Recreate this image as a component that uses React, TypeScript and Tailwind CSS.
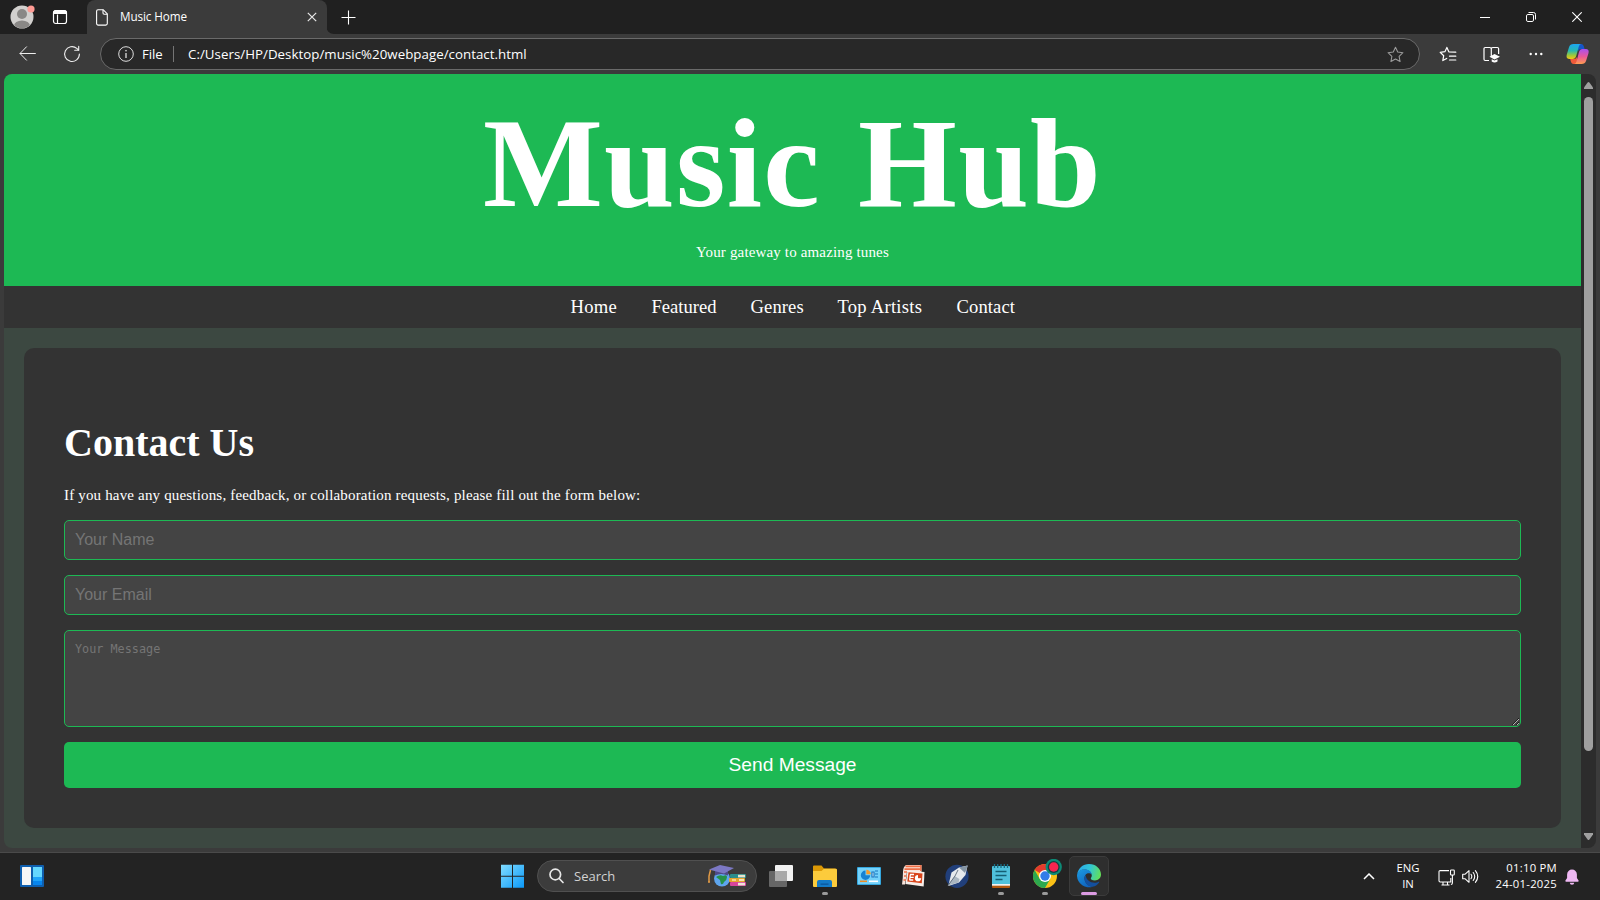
import React from "react";

const UI = "font-['Open_Sans','Noto_Sans',sans-serif]";

function TitleBar() {
  return (
    <div className="flex h-[34px] shrink-0 items-stretch bg-[#202020]">
      <div className="flex w-[87px] items-center bg-[#202020]">
        <svg className="ml-[10px]" width="26" height="26" viewBox="0 0 26 26">
          <defs>
            <clipPath id="av"><circle cx="12" cy="13" r="11.3" /></clipPath>
          </defs>
          <circle cx="12" cy="13" r="11.5" fill="#d2d0ce" />
          <g clipPath="url(#av)" fill="#8a8886">
            <circle cx="12" cy="10" r="5" />
            <ellipse cx="12" cy="22" rx="8" ry="5.6" />
          </g>
          <circle cx="21" cy="5" r="3.6" fill="#ff9b94" />
        </svg>
        <svg className="ml-[16px]" width="16" height="16" viewBox="0 0 16 16" fill="none" stroke="#fff">
          <rect x="1.5" y="1.5" width="13" height="13" rx="2.2" strokeWidth="1.2" />
          <path d="M1.5 3.7a2.2 2.2 0 0 1 2.2-2.2h8.6a2.2 2.2 0 0 1 2.2 2.2V4.500h-13z" fill="#fff" />
          <path d="M5.5 5.5v9" strokeWidth="1.2" />
        </svg>
      </div>
      <div className="flex w-[240px] items-center rounded-t-[8px] bg-[#3b3b3b]">
        <svg className="ml-[9px]" width="12" height="17" viewBox="0 0 12 17" fill="none" stroke="#fff" strokeWidth="1.1" strokeLinejoin="round">
          <path d="M2 .8h5.3l4 4V14.500a1.600 1.600 0 0 1-1.600 1.600H2.200A1.600 1.600 0 0 1 .6 14.500V2.300A1.500 1.500 0 0 1 2 .8z" />
          <path d="M7 .8v3.200a1.200 1.200 0 0 0 1.200 1.200h3" />
        </svg>
        <span className={`${UI} -mt-[2px] ml-[12px] w-[187px] text-[11.7px] leading-4 tracking-[-0.1px] text-white`}>Music Home</span>
        <svg width="10" height="10" viewBox="0 0 10 10" stroke="#e8e8e8" strokeWidth="1.2">
          <path d="M.8.8l8.400 8.400M9.200.8L.8 9.200" />
        </svg>
      </div>
      <div className="flex flex-1 items-center">
        <svg className="-ml-px self-end" width="8" height="8" viewBox="0 0 8 8"><path d="M0 0v8h8A8 8 0 0 1 0 0z" fill="#3b3b3b" /></svg>
        <svg className="ml-[7px]" width="15" height="15" viewBox="0 0 15 15" stroke="#fff" strokeWidth="1.100"><path d="M7.500.5v14M.5 7.500h14" /></svg>
        <div className="flex-1" />
        <svg width="10" height="10" viewBox="0 0 10 10" stroke="#fff"><path d="M0 5.500h10" /></svg>
        <svg className="ml-[36px]" width="10" height="10" viewBox="0 0 10 10" fill="none" stroke="#fff">
          <rect x=".5" y="2.500" width="7" height="7" rx="1.400" />
          <path d="M2.500.5H7.500A2 2 0 0 1 9.500 2.500V7.500" />
        </svg>
        <svg className="ml-[36px] mr-[18px]" width="10" height="10" viewBox="0 0 10 10" stroke="#fff" strokeWidth="1.100"><path d="M.3.3l9.400 9.400M9.700.3L.3 9.700" /></svg>
      </div>
    </div>
  );
}

const STAR = "M8 1.200l2.100 4.500 4.900.6-3.600 3.400.9 4.900L8 12.200l-4.300 2.400.9-4.900L1 6.300l4.900-.6z";

function Toolbar() {
  return (
    <div className="flex h-10 shrink-0 items-center bg-[#3b3b3b]">
      <svg className="-mt-px ml-[19px]" width="17" height="15" viewBox="0 0 17 15" fill="none" stroke="#eee" strokeWidth="1" strokeLinecap="round" strokeLinejoin="round">
        <path d="M7.500.8L1 7.500l6.500 6.700M1.200 7.500H16.400" />
      </svg>
      <svg className="ml-[27px]" width="18" height="18" viewBox="0 0 18 18" fill="none" stroke="#eee" strokeWidth="1.100" strokeLinecap="round">
        <path d="M16.400 9a7.400 7.400 0 1 1-2.600-5.600L15.500 5" />
        <path d="M15.700 1.200V5.200H11.700" />
      </svg>
      <div className="ml-[19px] flex h-8 w-[1320px] items-center rounded-full border border-[#6a6a6a] bg-[#282828]">
        <svg className="ml-[17px]" width="16" height="16" viewBox="0 0 16 16" fill="none" stroke="#ddd">
          <circle cx="8" cy="8" r="7.300" strokeWidth="1" />
          <path d="M8 7v5" strokeWidth="1.300" />
          <circle cx="8" cy="4.700" r=".5" fill="#fff" strokeWidth=".6" />
        </svg>
        <span className={`${UI} ml-[8px] w-[22px] text-[13.2px] leading-5 tracking-[-0.1px] text-white`}>File</span>
        <div className="ml-[9px] h-4 w-px bg-[#757575]" />
        <span className={`${UI} ml-[14px] flex-1 whitespace-nowrap text-[13.3px] leading-5 tracking-[0.03px] text-white`}>
          C:/Users/HP/Desktop/music%20webpage/contact.html
        </span>
        <svg className="mr-[15px]" width="17" height="17" viewBox="0 0 16 16" fill="none" stroke="#9a9a9a" strokeLinejoin="round"><path d={STAR} /></svg>
      </div>
      <svg className="ml-[19px]" width="18" height="17" viewBox="0 0 18 17" fill="none" stroke="#fff" strokeWidth="1.200" strokeLinejoin="round" strokeLinecap="round">
        <path d="M16.200 6.200L9.800 5.800 7.900 1.400 5.900 5.700 1.200 6.300l3.500 3.400-.9 4.900 3.900-2.200M11.500 6.200h5.300M10.500 10.200h6.300M10.500 14h6.300" />
      </svg>
      <svg className="ml-[26px]" width="17" height="17" viewBox="0 0 17 17" fill="none" stroke="#fff" strokeWidth="1.200">
        <path d="M6 14.500H2.200A1.200 1.200 0 0 1 1 13.300V2.700a1.200 1.200 0 0 1 1.200-1.200h4.600A1.700 1.700 0 0 1 8.300 3v8M8.300 3a1.700 1.700 0 0 1 1.500-1.500h4.600a1.200 1.200 0 0 1 1.200 1.200V8" />
        <path d="M11.500 8l5.500 2.700-5.500 2.800-5-2.800z" fill="#fff" stroke="none" />
        <path d="M8.700 13.200l2.800 1.300 3-1.300v2.300q-3 2-5.800 0z" fill="#fff" stroke="none" />
      </svg>
      <svg className="ml-[29px]" width="14" height="4" viewBox="0 0 14 4" fill="#fff"><circle cx="1.700" cy="2" r="1.200" /><circle cx="7" cy="2" r="1.200" /><circle cx="12.300" cy="2" r="1.200" /></svg>
      <svg className="ml-[23px]" width="23" height="22" viewBox="0 0 23 22">
        <defs>
          <linearGradient id="cp1" x1="0" y1="0" x2="0" y2="1"><stop offset="0" stopColor="#1ca6f4" /><stop offset=".45" stopColor="#27b8b0" /><stop offset=".75" stopColor="#9bc83b" /><stop offset="1" stopColor="#f5c516" /></linearGradient>
          <linearGradient id="cp2" x1="0" y1="0" x2="0" y2="1"><stop offset="0" stopColor="#a850f0" /><stop offset=".5" stopColor="#e8589a" /><stop offset="1" stopColor="#ff9c50" /></linearGradient>
        </defs>
        <path d="M11 1h4.200q1.800 0 2.500 2l.9 3h-3.600q-2 0-2.700 2z" fill="#1555c9" />
        <path d="M12 21H7.500q-1.800 0-2.500-2l-.8-3h4q2 0 2.600-2z" fill="#ef5a3a" />
        <path d="M7.500 1H15q-1.600.4-2.200 2.500l-2.600 9.500Q9.300 16 6.600 16H3.500Q-.3 16 .8 11.500L3 4.300Q4 1 7.500 1z" fill="url(#cp1)" />
        <path d="M15.500 21H8.300q1.600-.4 2.200-2.500L13 9q.9-3 3.500-3H20q3.500 0 2.400 4.500l-2.300 7.200Q19 21 15.500 21z" fill="url(#cp2)" />
      </svg>
    </div>
  );
}

function WebPage() {
  const field =
    "block w-full rounded-[5px] border border-[#1db954] bg-[#444] px-[10px] text-white outline-none placeholder:text-[#757575]";
  return (
    <div className="flex h-[774px] w-[1577px] flex-col overflow-hidden rounded-bl-[8px] rounded-tl-[8px] bg-[#3c4841] font-['Liberation_Serif',serif] text-white">
      <header className="flex h-[212px] flex-col items-center bg-[#1db954] pt-[16px]">
        <h1 className="whitespace-nowrap text-[127px] font-bold leading-[146px] tracking-[1.3px] [word-spacing:4px]">Music Hub</h1>
        <p className="mt-[6px] text-[15px] leading-5 tracking-[0.15px]">Your gateway to amazing tunes</p>
      </header>
      <nav className="flex h-[42px] justify-center gap-[34px] whitespace-nowrap bg-[#333] pt-[9px] text-[18.6px] leading-6">
        <a className="w-[47px] tracking-[0.3px]">Home</a>
        <a className="w-[65px]">Featured</a>
        <a className="w-[53px] tracking-[0.1px]">Genres</a>
        <a className="w-[85px] tracking-[0.25px]">Top Artists</a>
        <a className="w-[58px] tracking-[0.1px]">Contact</a>
      </nav>
      <main className="m-5 h-[480px] rounded-[10px] bg-[#333] px-10 pt-[70px]">
        <h2 className="text-[40px] font-bold leading-[50px]">Contact Us</h2>
        <p className="mt-[17px] h-[35px] whitespace-nowrap text-[15px] leading-5 tracking-[0.17px]">
          If you have any questions, feedback, or collaboration requests, please fill out the form below:
        </p>
        <form className="flex flex-col gap-[15px]">
          <input className={`${field} h-10 font-['Liberation_Sans',sans-serif] text-[16px]`} placeholder="Your Name" />
          <input className={`${field} h-10 font-['Liberation_Sans',sans-serif] text-[16px]`} placeholder="Your Email" />
          <textarea className={`${field} h-[97px] resize py-[10px] font-['DejaVu_Sans_Mono',monospace] text-[11.8px] leading-4`} placeholder="Your Message" />
          <button type="button" className="h-[46px] rounded-[5px] bg-[#1db954] font-['Liberation_Sans',sans-serif] text-[19.2px]">Send Message</button>
        </form>
      </main>
    </div>
  );
}

function ScrollBar() {
  return (
    <div className="flex h-[774px] w-[15px] flex-col items-center rounded-r-[8px] bg-[#2c2c2c] pt-[8px]">
      <svg width="9" height="7" viewBox="0 0 9 7" fill="#9f9f9f"><path d="M3.600.6Q4.500-.5 5.400.6L9 5.500V7H0V5.500z" /></svg>
      <div className="mt-[8px] h-[654px] w-[9px] rounded-full bg-[#9f9f9f]" />
      <svg className="mt-[82px]" width="9" height="7" viewBox="0 0 9 7" fill="#9f9f9f"><path d="M3.600 6.400Q4.500 7.500 5.400 6.400L9 1.500V0H0V1.500z" /></svg>
    </div>
  );
}

function Cell({ children, mark }: { children: React.ReactNode; mark?: boolean }) {
  return (
    <div className="flex h-[46px] w-11 flex-col items-center pt-[11px]">
      <div className="flex h-6 items-center">{children}</div>
      {mark && <div className="mt-[4px] h-[3px] w-[6px] rounded-full bg-[#9a9a9a]" />}
    </div>
  );
}

function EdgeIcon() {
  return (
    <svg width="24" height="24" viewBox="0 0 24 24">
      <defs>
        <linearGradient id="e1" x1="0" y1=".3" x2="1" y2=".5"><stop offset="0" stopColor="#2aa8ea" /><stop offset=".5" stopColor="#31c5d5" /><stop offset="1" stopColor="#62e05a" /></linearGradient>
        <linearGradient id="e2" x1="0" y1="0" x2=".6" y2="1"><stop offset="0" stopColor="#1c9be2" /><stop offset="1" stopColor="#0f63bd" /></linearGradient>
      </defs>
      <path d="M.3 10C1.300 4 6 0 12 0c7 0 12 5 12 10.500 0 3.700-2.900 5.900-6.100 5.900-3 0-4.100-1-4.100-1.900 0-.7 1-1.200 1-2.900C14.800 8 11 5.500 7.500 5.500 4.200 5.500 1.500 7.500.3 10z" fill="url(#e1)" />
      <path d="M0 12c0-4 3.300-6.700 7.500-6.700 3.800 0 7 2.200 7.300 5.300-.8-1-2-1.400-3.200-1.400-2.500 0-4.100 2.300-4.100 5 0 4.600 4.400 8.300 8.300 8.500A12 12 0 0 1 0 12z" fill="url(#e2)" />
      <path d="M8.800 11c-1 1.200-1.300 2.400-1.300 3.500 0 4.500 3.700 8.200 8 8.200 3 0 5.500-2.200 6.700-4.400.3-.6-.2-.9-.6-.6-1 .6-2.500 1-4 1-4.600 0-8.800-3-8.800-7.700z" fill="#134f9e" />
    </svg>
  );
}

function TaskBar() {
  return (
    <div className="flex h-[48px] shrink-0 items-start border-t border-[#4a4a4a] bg-[#232323]">
      <div className="w-[490px] pl-5 pt-[12px]">
        <svg width="24" height="22" viewBox="0 0 24 22">
          <rect width="24" height="22" rx="1" fill="#0f5faf" />
          <rect x="2" y="2" width="9" height="18" rx=".5" fill="#f6f6f6" />
          <rect x="13" y="2" width="9" height="10" fill="#65d8ff" />
          <rect x="13" y="12" width="9" height="4" fill="#1fa5fb" />
          <rect x="13" y="16" width="9" height="4" fill="#0785ee" />
        </svg>
      </div>
      <Cell>
        <svg width="24" height="24" viewBox="0 0 24 24">
          <defs><linearGradient id="win" gradientUnits="userSpaceOnUse" x1="1" y1="1" x2="24" y2="24"><stop offset="0" stopColor="#80dcff" /><stop offset="1" stopColor="#0a98f8" /></linearGradient></defs>
          <path d="M1 .8h11v11H1zM13 .8h11v11H13zM1 12.800h11v11H1zM13 12.800h11v11H13z" fill="url(#win)" />
        </svg>
      </Cell>
      <div className="ml-[3px] mr-[2px] mt-[7px] flex h-8 w-[220px] items-center rounded-full border border-[#505050] bg-[#3c3c3c]">
        <svg className="ml-[11px]" width="15" height="16" viewBox="0 0 15 16" fill="none" stroke="#e6e6e6" strokeWidth="1.700" strokeLinecap="round"><circle cx="6.300" cy="6.500" r="5.300" /><path d="M10.200 10.500l3.800 4" /></svg>
        <span className={`${UI} ml-[10px] flex-1 text-[13px] leading-5 text-[#d2d2d2]`}>Search</span>
        <svg className="mr-[9px]" width="40" height="24" viewBox="0 0 40 24">
          <circle cx="15" cy="14.500" r="8" fill="#5ea5ee" />
          <path d="M9 13q4-3 7-1 4-2 4 1t-3 5q-1 3-3 2l-1-4z" fill="#26924a" />
          <path d="M8 6.500v5q6-3 13 0v-5z" fill="#504a87" />
          <path d="M2 5.500L13 1l14 3-10 5.500z" fill="#7c78c4" />
          <path d="M3.500 6L2 12v6M1 18h2" fill="none" stroke="#e19a45" strokeWidth="1.500" />
          <rect x="23" y="10" width="16" height="4" rx="1" fill="#2b8e8b" /><rect x="31" y="10.800" width="7" height="2.600" fill="#e9e2cc" />
          <rect x="22" y="14" width="16" height="4" rx="1" fill="#e4a52d" /><rect x="25" y="15" width="4" height="2" fill="#f3d58a" /><rect x="32" y="15" width="5" height="2" fill="#f5e5b8" />
          <rect x="23" y="18" width="16" height="4" rx="1" fill="#d8459c" /><rect x="31" y="18.800" width="7" height="2.600" fill="#eee4d8" />
        </svg>
      </div>
      <Cell>
        <svg width="24" height="22" viewBox="0 0 24 22">
          <rect x="6" width="18" height="16" rx="1" fill="#f2f2f2" />
          <rect y="6" width="18" height="16" rx="1" fill="#666" />
          <path d="M6 6h12v10H6z" fill="#a9a9a9" />
        </svg>
      </Cell>
      <Cell mark>
        <svg width="24" height="22" viewBox="0 0 24 22">
          <path d="M0 1.500Q0 .5 1 .5h7.500l2.500 3h11q1 0 1 1V10H0z" fill="#dc9805" />
          <path d="M0 6h8.500L11 3.700h12q1 0 1 1V21q0 1-1 1H1q-1 0-1-1z" fill="#fccb3c" />
          <path d="M4 22v-5q0-2 2-2h11q2 0 2 2v5z" fill="#147ac6" /><path d="M7.500 18.500h8v1.300h-8z" fill="#0b559a" />
        </svg>
      </Cell>
      <Cell>
        <svg width="24" height="18" viewBox="0 0 24 18">
          <rect width="24" height="18" rx="1" fill="#35a7de" /><rect x="1" y="1" width="22" height="16" fill="#74d2fb" />
          <path d="M8.500 8V3.500a4.700 4.700 0 1 0 4.700 4.700H8.500z" fill="#1682d2" /><path d="M9.300 7.300V2.800a4.500 4.500 0 0 1 4.500 4.500z" fill="#f49b2a" />
          <path d="M15 5h2v5h-2zM18 4h3M18 7h3M18 10h3" stroke="#1674c0" strokeWidth="1.200" fill="#fff" />
          <path d="M3 14.300h7" stroke="#ee8b24" strokeWidth="1.600" /><path d="M12 14.300h9" stroke="#fff" strokeWidth="1.600" />
        </svg>
      </Cell>
      <Cell>
        <svg className="-mt-[2px] -ml-px" width="24" height="23" viewBox="0 0 24 23">
          <path d="M5 1h15.500v7H6L4 20.500H1q1-7 1-12.500 0-5 3-7z" fill="#f7e3da" />
          <path d="M4.500 2.300h15M3.500 5.200h16M3 8h3M3 12h2.500M2.500 16h2.500" stroke="#ee6f47" strokeWidth="1.700" />
          <path d="M19.800 1v6" stroke="#ee6f47" strokeWidth="1.400" />
          <path d="M6.500 6.500l17 1.500-.8 14.500L4.500 20z" fill="#f7eee9" />
          <path d="M7.500 8.300l14 1.300-.7 9.700L6.300 17.500z" fill="#d9441a" />
          <path d="M9 10.500h4M8.700 13.300h4M8.400 16h3.800M9.300 10.500L8.700 16" stroke="#fff" strokeWidth="1.300" /><circle cx="17" cy="14.200" r="3.100" fill="#fff" /><path d="M17 14.200V10.500h3.500v3.700z" fill="#d9441a" />
        </svg>
      </Cell>
      <Cell>
        <svg width="24" height="24" viewBox="0 0 24 24">
          <circle cx="12" cy="12.300" r="11.600" fill="#213f7a" />
          <path d="M3.500 21L6.500 8.500 14 3.500 22.500 1.500 20.500 11 14 18.500 3.300 22z" fill="#e5e9ed" />
          <path d="M3 21.500L9.500 12l5 3-1 3.500z" fill="#a9b6c2" /><path d="M14 3.500l9-2-3 7.500z" fill="#8494a4" /><path d="M3 21.500L10 12l3-6" fill="none" stroke="#4d5b6b" strokeWidth=".8" />
        </svg>
      </Cell>
      <Cell mark>
        <svg width="18" height="24" viewBox="0 0 18 24">
          <rect y="2" width="18" height="19" rx="1" fill="#50c1dc" /><path d="M0 20h18v3q0 1-1 1H1q-1 0-1-1z" fill="#b3580e" /><path d="M0 20h18v1.700H0z" fill="#f1f1f1" />
          <path d="M2.500 0v4M5.700 0v4M9 0v4M12.300 0v4M15.500 0v4" stroke="#176e85" strokeWidth="1.300" />
          <path d="M3.500 7.500h11M3.500 11.500h11M3.500 15.500h7" stroke="#155f73" strokeWidth="1.300" />
        </svg>
      </Cell>
      <Cell mark>
        <svg className="-mt-[5px] ml-[5px]" width="29" height="29" viewBox="0 0 29 29">
          <circle cx="12" cy="17" r="12" fill="#fbc116" />
          <path d="M12 17L1.600 11A12 12 0 0 1 22.400 11H12z" fill="#e33b2e" />
          <path d="M1.600 11A12 12 0 0 0 12 29l5.200-9L12 17 6.800 20z" fill="#2da94f" />
          <circle cx="12" cy="17" r="6" fill="#fff" /><circle cx="12" cy="17" r="4.700" fill="#327ce9" />
          <circle cx="20.700" cy="8" r="8.200" fill="#0d8a76" /><circle cx="20.700" cy="8" r="6" fill="#123f42" /><circle cx="20.700" cy="8" r="4.700" fill="#f5244f" />
        </svg>
      </Cell>
      <div className="ml-[2px] mt-[3px] flex h-10 w-10 flex-col items-center rounded-[5px] border border-[#3b3b3b] bg-[#2e2e2e] pt-[7px]">
        <EdgeIcon />
        <div className="mt-[4px] h-[3px] w-4 shrink-0 rounded-full bg-[#dc9be3]" />
      </div>
      <div className={`${UI} ml-auto flex h-[46px] items-center text-[11px] leading-4 text-white`}>
        <svg className="mr-[21px]" width="12" height="7" viewBox="0 0 12 7" fill="none" stroke="#fff" strokeWidth="1.500"><path d="M1 6l5-5 5 5" /></svg>
        <div className="mr-[18px] w-6 text-center text-[11.300px]">ENG<br />IN</div>
        <svg className="mr-[7px] mt-[2px]" width="17" height="17" viewBox="0 0 17 17" fill="none" stroke="#fff" strokeWidth="1.100">
          <path d="M11 1.600H2.200A1.200 1.200 0 0 0 1 2.800v9A1.200 1.200 0 0 0 2.200 13h10.600V9M5 13v2.800M9.500 13v2.800M3.500 16h8" />
          <rect x="12.500" y="1" width="3.800" height="5" rx=".8" /><path d="M14.400 6v8q0 1.500-1.500 1.500" />
        </svg>
        <svg className="mr-[15px]" width="17" height="15" viewBox="0 0 17 15" fill="none" stroke="#fff" strokeWidth="1.100" strokeLinecap="round" strokeLinejoin="round">
          <path d="M.7 5.200h2.500L7 1.700v11.600L3.200 9.800H.7z" /><path d="M9 5.300q1.600 2.200 0 4.400M11.200 3.500q3 4 0 8M13.400 1.700q4.700 5.800 0 11.600" />
        </svg>
        <div className="-mt-px mr-[8px] w-[63px] whitespace-nowrap text-right text-[11.300px] tracking-[0.25px]">01:10 PM<br />24-01-2025</div>
        <svg className="mr-[21px] mt-[2px]" width="14" height="16" viewBox="0 0 14 16" fill="#efb8f3"><path d="M7 .5A4.900 4.900 0 0 1 11.900 5.400v3.500l1.700 2.700q.3 1.200-.8 1.200H1.200q-1.100 0-.8-1.200L2.100 8.900V5.400A4.900 4.900 0 0 1 7 .5zM4.800 13.700h4.400a2.200 2 0 0 1-4.400 0z" /></svg>
      </div>
    </div>
  );
}

export default function App() {
  return (
    <div className="flex h-[900px] w-[1600px] flex-col overflow-hidden bg-[#3b3b3b]">
      <TitleBar />
      <Toolbar />
      <div className="flex h-[778px] shrink-0 px-1">
        <WebPage />
        <ScrollBar />
      </div>
      <TaskBar />
    </div>
  );
}
